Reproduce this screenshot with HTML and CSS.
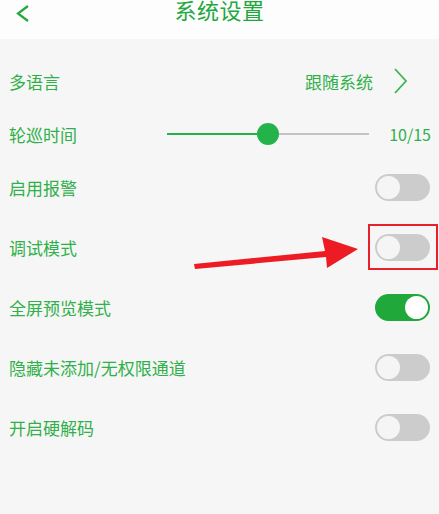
FILE: index.html
```html
<!DOCTYPE html>
<html lang="zh">
<head>
    <meta charset="UTF-8">
    <meta name="viewport" content="width=device-width, initial-scale=1.0">
    <title>系统设置</title>
    <link rel="stylesheet" href="styles.css">
</head>
<body>
    <div class="header">
        <svg class="back" width="14" height="17" viewBox="0 0 14 17">
            <polyline points="12,1 2,8.5 12,16" fill="none" stroke="#22a83d" stroke-width="2.2"/>
        </svg>
        <h1>系统设置</h1>
    </div>

    <div class="list">
        <div class="row">
            <span class="label">多语言</span>
            <span class="value">跟随系统</span>
            <svg class="more" width="14" height="26" viewBox="0 0 14 26">
                <polyline points="1,1 12,13 1,25" fill="none" stroke="#3bb552" stroke-width="1.8"/>
            </svg>
        </div>

        <div class="row row-slider">
            <span class="label label-fixed">轮巡时间</span>
            <div class="slider">
                <div class="slider-fill"></div>
                <div class="slider-thumb"></div>
            </div>
            <span class="value count">10/15</span>
        </div>

        <div class="row">
            <span class="label">启用报警</span>
            <span class="toggle"></span>
        </div>

        <div class="row">
            <span class="label">调试模式</span>
            <span class="toggle"></span>
            <span class="mark"></span>
        </div>

        <div class="row">
            <span class="label">全屏预览模式</span>
            <span class="toggle on"></span>
        </div>

        <div class="row">
            <span class="label">隐藏未添加/无权限通道</span>
            <span class="toggle"></span>
        </div>

        <div class="row">
            <span class="label">开启硬解码</span>
            <span class="toggle"></span>
        </div>

        <!-- arrow drawn over the list -->
        <svg class="arrow" width="439" height="475" viewBox="0 39 439 475">
            <polygon points="194,264 325,251 322,237 358,249 327,268 326,257 195,269" fill="#ed1c24"/>
        </svg>
    </div>
</body>
</html>
```

FILE: styles.css
```css
* {
    box-sizing: border-box;
}
body {
    font-family: "Noto Sans CJK SC", "Noto Sans", sans-serif;
    background-color: #f6f6f6;
    margin: 0;
    color: #30b04a;
}
.header {
    height: 39px;
    background: #fdfdfd;
    position: relative;
    display: flex;
    justify-content: center;
}
.header h1 {
    margin: -2px 0 0;
    font-size: 22px;
    font-weight: normal;
    line-height: 22px;
    letter-spacing: 0.5px;
    color: #22a83d;
}
.back {
    position: absolute;
    left: 16px;
    top: 5px;
}
.list {
    position: relative;
    padding-top: 12px;
}
.row {
    position: relative;
    height: 60px;
    display: flex;
    align-items: center;
    padding: 0 9px;
    font-size: 17px;
}
.row-slider {
    height: 46px;
}
.label {
    margin-right: auto;
}
.label-fixed {
    width: 158px;
    margin-right: 0;
}
.value {
    color: #30b04a;
}
.more {
    margin-left: 21px;
    margin-right: 22px;
}
.count {
    margin-left: auto;
    margin-right: -1px;
    font-size: 16px;
}
.slider {
    position: relative;
    width: 202px;
    height: 2px;
    background: #c4c4c4;
}
.slider-fill {
    width: 101px;
    height: 2px;
    background: #24b24a;
}
.slider-thumb {
    position: absolute;
    left: 90px;
    top: -10px;
    width: 22px;
    height: 22px;
    border-radius: 50%;
    background: #24b24a;
}
.toggle {
    position: relative;
    width: 55px;
    height: 27px;
    border-radius: 14px;
    background: #cccccc;
}
.toggle::after {
    content: "";
    position: absolute;
    left: 2px;
    top: 2px;
    width: 23px;
    height: 23px;
    border-radius: 50%;
    background: #f5f5f5;
}
.toggle.on {
    background: #20a83b;
}
.toggle.on::after {
    left: 30px;
    background: #ffffff;
}
.mark {
    position: absolute;
    left: 368px;
    top: 7px;
    width: 70px;
    height: 46px;
    border: 2px solid #e8202a;
}
.arrow {
    position: absolute;
    left: 0;
    top: 0;
}
```
